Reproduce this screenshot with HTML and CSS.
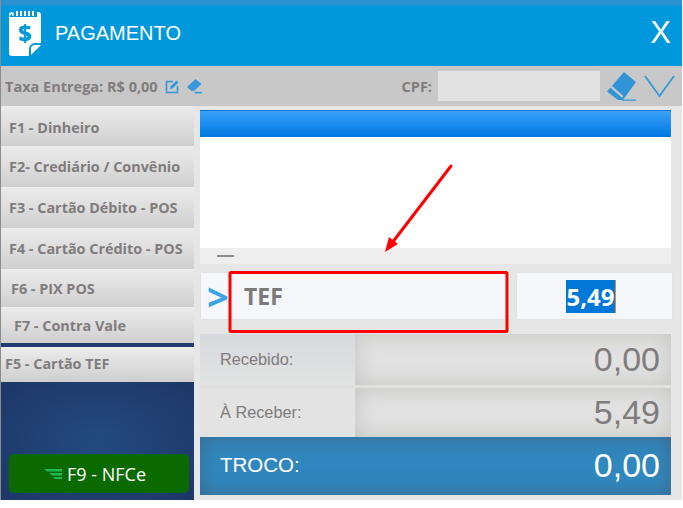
FILE: index.html
```html
<!DOCTYPE html>
<html lang="pt-BR">

<head>
    <meta charset="UTF-8">
    <meta name="viewport" content="width=device-width, initial-scale=1.0">
    <title>Pagamento</title>
    <link rel="stylesheet" href="styles.css">
</head>

<body>
    <div class="window">
        <!-- titulo -->
        <header class="title-bar">
            <svg class="title-icon" width="35" height="46" viewBox="0 0 35 46">
                <path fill="#fff" d="M1 7V5a3 3 0 0 1 3-3v4h1.500V2h-.5zM8 1h2v5H8zM12 1h2v5h-2zM16 1h2v5h-2zM20 1h2v5h-2zM24 1h2v5h-2zM29 2h1a3 3 0 0 1 3 3v2h-4z" />
                <path fill="#fff" d="M1 7h32v26h-6a6 6 0 0 0-6 6v7H4a3 3 0 0 1-3-3z" />
                <path fill="#fff" d="M23 45v-6a4 4 0 0 1 4-4h6z" />
                <text class="title-icon-text" x="17" y="32" text-anchor="middle">$</text>
            </svg>
            <span class="title-text">PAGAMENTO</span>
            <span class="close-btn">X</span>
        </header>

        <!-- barra de taxa e cpf -->
        <div class="tool-bar">
            <span class="tool-label">Taxa Entrega: R$ 0,00</span>
            <svg class="edit-icon" width="15" height="15" viewBox="0 0 15 15">
                <path fill="none" stroke="#3498db" stroke-width="1.6" d="M8 2.500H1.500v11h11V7" />
                <path fill="#3498db" d="M5.500 7.500 11.500 1.500l2 2-6 6-2.500.5z" />
            </svg>
            <svg class="eraser-small" width="17" height="16" viewBox="0 0 16 15">
                <path fill="#3498db" d="M1 8.500 9 1l5.500 4.500L8 12H5z" />
                <path fill="#3498db" d="M8 13h7v1.500H8z" />
            </svg>
            <span class="tool-label cpf-label">CPF:</span>
            <input class="cpf-input" type="text">
            <svg class="eraser-big" width="31" height="31" viewBox="0 0 31 31">
                <path fill="#2f95d6" d="M1 20.500 18 1l12 10L17 29h-5z" />
                <path fill="#c8c8c8" d="M5.500 14.500l12 10.500-1.500 1.800-12-10.500z" />
                <path fill="#2f95d6" d="M16 28.500h14v1.200H16z" />
            </svg>
            <svg class="check-icon" width="31" height="24" viewBox="0 0 31 24">
                <path fill="none" stroke="#3498db" stroke-width="1.800" d="M1 2l14.500 20L30 2" />
            </svg>
        </div>

        <div class="main">
            <!-- formas de pagamento -->
            <aside class="side-menu">
                <div class="menu-item item-a">F1 - Dinheiro</div>
                <div class="menu-item item-b">F2- Crediário / Convênio</div>
                <div class="menu-item item-b">F3 - Cartão Débito - POS</div>
                <div class="menu-item item-b">F4 - Cartão Crédito - POS</div>
                <div class="menu-item item-c">F6 - PIX POS</div>
                <div class="menu-item item-d">F7 - Contra Vale</div>
                <div class="menu-item item-e">F5 - Cartão TEF</div>
                <div class="side-fill">
                    <button class="nfce-btn">
                        <svg width="19" height="10" viewBox="0 0 19 10">
                            <path fill="#1db954" d="M0 0h18v2.500H3zM5 4h13v2.500H8zM9 8h9v2h-7z" />
                        </svg>
                        F9 - NFCe
                    </button>
                </div>
            </aside>

            <!-- conteudo -->
            <section class="content">
                <div class="list-head"></div>
                <div class="list-body"></div>
                <div class="list-foot"><span class="foot-dash"></span></div>

                <div class="entry-row">
                    <div class="entry-card type-card">
                        <span class="chevron">&gt;</span>
                        <span class="type-name">TEF</span>
                    </div>
                    <div class="entry-card value-card"><span class="selected-value">5,49</span></div>
                </div>

                <div class="totals">
                    <div class="total-row row-top">
                        <div class="total-label">Recebido:</div>
                        <div class="total-value">0,00</div>
                    </div>
                    <div class="total-row row-bottom">
                        <div class="total-label">À Receber:</div>
                        <div class="total-value">5,49</div>
                    </div>
                    <div class="troco-row">
                        <span>TROCO:</span>
                        <span class="troco-value">0,00</span>
                    </div>
                </div>
            </section>
        </div>
    </div>

    <!-- marcacao vermelha sobre a tela -->
    <svg class="markup" width="683" height="508" viewBox="0 0 683 508">
        <rect x="230" y="272.500" width="277" height="59" rx="1" fill="none" stroke="#f00" stroke-width="3" />
        <path fill="none" stroke="#f00" stroke-width="3" stroke-linecap="round" d="M451 166 392 243" />
        <path fill="#f00" d="M385 252 389 237 398 244z" />
    </svg>
</body>

</html>
```

FILE: styles.css
```css
* {
    margin: 0;
    padding: 0;
    box-sizing: border-box;
}

body {
    background: white;
    font-family: 'Open Sans', sans-serif;
    overflow: hidden;
}

.window {
    width: 682px;
    height: 500px;
    display: flex;
    flex-direction: column;
    background: #e6e6e6;
    border-left: 1px solid #8c8c8c;
}

/* titulo */
.title-bar {
    height: 66px;
    display: flex;
    align-items: center;
    padding: 0 11px 0 7px;
    background: linear-gradient(#2a90d0 0, #2a90d0 5px, #0098dc 6px);
    color: white;
    font-family: 'Liberation Sans', sans-serif;
}

.title-icon {
    align-self: flex-start;
    margin-top: 10px;
}

.title-icon-text {
    font-family: 'Open Sans', sans-serif;
    font-size: 23px;
    font-weight: 800;
    fill: #0098dc;
}

.title-text {
    margin-left: 12px;
    font-size: 20px;
}

.close-btn {
    margin-left: auto;
    font-size: 31px;
}

/* barra de taxa e cpf */
.tool-bar {
    height: 40px;
    display: flex;
    align-items: center;
    padding-left: 4px;
    background: #c8c8c8;
}

.tool-label {
    color: #807c7c;
    font-size: 14.500px;
    font-weight: 700;
}

.edit-icon {
    margin-left: 7px;
}

.eraser-small {
    margin-left: 6px;
}

.cpf-label {
    margin-left: auto;
}

.cpf-input {
    width: 162px;
    height: 30px;
    margin-left: 6px;
    border: none;
    background: #e2e2e2;
}

.eraser-big {
    margin-left: 6px;
}

.check-icon {
    margin-left: 7px;
    margin-right: 7px;
}

.main {
    flex: 1;
    display: flex;
    min-height: 0;
}

/* formas de pagamento */
.side-menu {
    width: 193px;
    display: flex;
    flex-direction: column;
    background: #1f3d70;
}

.menu-item {
    display: flex;
    align-items: center;
    color: #807c7c;
    font-size: 14.400px;
    font-weight: 700;
    background: linear-gradient(#ececec, #cfcfcf);
}

.item-a {
    height: 40px;
    padding: 3px 0 0 8px;
}

.item-b {
    height: 41px;
    padding: 0 0 0 8px;
}

.item-c {
    height: 38px;
    padding: 0 0 0 10px;
}

.item-d {
    height: 36px;
    padding: 0 0 0 13px;
}

.item-e {
    height: 35px;
    margin-top: 4px;
    padding: 0 0 2px 4px;
}

.side-fill {
    flex: 1;
    display: flex;
    align-items: flex-end;
    padding: 0 4px 7px 8px;
    background: radial-gradient(ellipse at center, #234a80, #1d3766);
}

.nfce-btn {
    width: 180px;
    height: 39px;
    display: flex;
    align-items: center;
    justify-content: center;
    gap: 4px;
    padding-right: 8px;
    border: none;
    border-radius: 5px;
    background: #0a6a00;
    color: white;
    font-family: 'Open Sans', sans-serif;
    font-size: 18px;
}

/* conteudo */
.content {
    flex: 1;
    display: flex;
    flex-direction: column;
    padding: 4px 11px 0 6px;
}

.list-head {
    height: 27px;
    border-top: 1px solid #0070d0;
    background: linear-gradient(#39a2fa, #0077e0);
}

.list-body {
    height: 111px;
    background: white;
}

.list-foot {
    height: 16px;
    padding: 7px 0 0 17px;
    background: #eeeeee;
}

.foot-dash {
    display: block;
    width: 17px;
    height: 2px;
    background: #8c8c8c;
}

.entry-row {
    display: flex;
    gap: 5px;
    height: 48px;
    margin: 8px -2px 0 0;
}

.entry-card {
    display: flex;
    align-items: center;
    background: #f5f7fa;
    border: 1px solid #e2e2e2;
    border-radius: 2px;
}

.type-card {
    width: 311px;
    padding-left: 6px;
}

.chevron {
    width: 30px;
    color: #3aa5e6;
    font-size: 38px;
    font-weight: 700;
    line-height: 40px;
}

.type-name {
    margin-left: 7px;
    color: #7a7a7a;
    font-size: 23px;
    font-weight: 700;
}

.value-card {
    flex: 1;
    justify-content: center;
    padding-right: 7px;
}

.selected-value {
    background: #0078d7;
    border-right: 1px solid #e08a3c;
    color: white;
    font-size: 24px;
    font-weight: 700;
    line-height: 33px;
}

/* totais */
.totals {
    margin-top: 14px;
    font-family: 'Liberation Sans', sans-serif;
    color: #807c7c;
}

.total-row {
    display: flex;
}

.row-top {
    height: 54px;
    border-bottom: 3px solid #e0e0de;
}

.row-bottom {
    height: 49px;
}

.total-label {
    width: 155px;
    display: flex;
    align-items: center;
    padding-left: 20px;
    font-size: 16.300px;
    background: linear-gradient(#d8d9de, #e2e3e2);
}

.row-bottom .total-label {
    background: #e2e3e2;
}

.total-value {
    flex: 1;
    display: flex;
    align-items: center;
    justify-content: flex-end;
    padding-right: 11px;
    font-size: 34px;
    background: #e1e2e1;
    box-shadow: inset 0 0 22px #c4c3c2;
}

.troco-row {
    height: 58px;
    display: flex;
    align-items: center;
    justify-content: space-between;
    padding: 0 11px 2px 20px;
    background: #3088bf;
    box-shadow: inset 0 0 22px #3c6a8e;
    color: white;
    font-size: 20.500px;
}

.troco-value {
    font-size: 34px;
}

/* marcacao vermelha */
.markup {
    position: absolute;
    top: 0;
    left: 0;
    pointer-events: none;
}
```
